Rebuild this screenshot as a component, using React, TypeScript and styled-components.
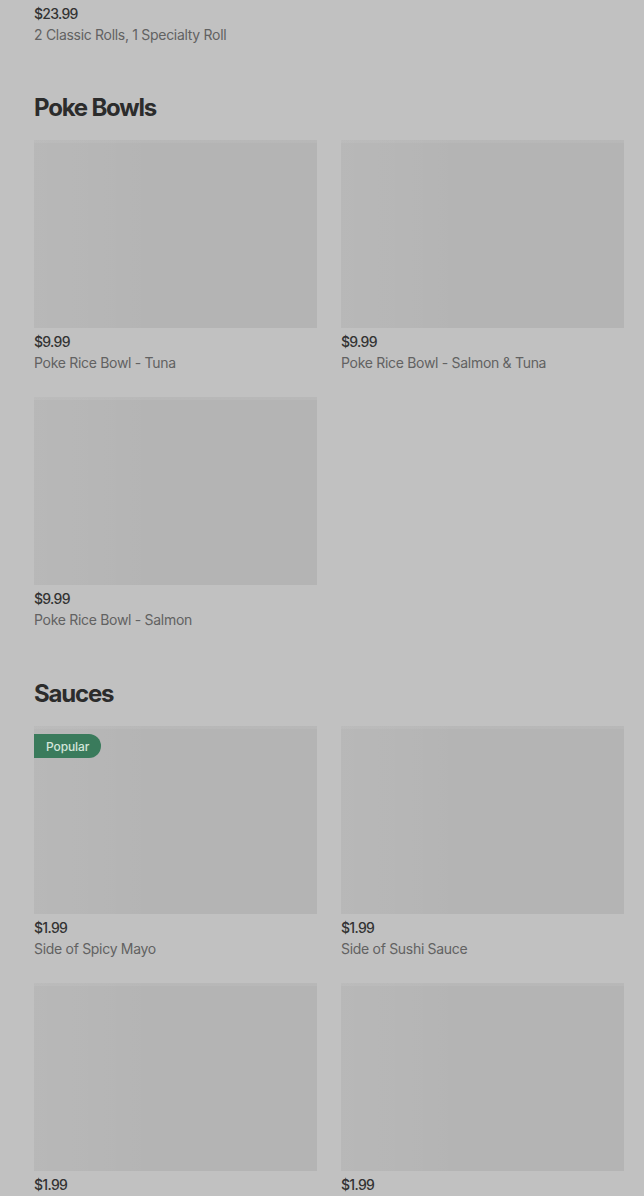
import React from "react";
import styled, { createGlobalStyle } from "styled-components";

const Global = createGlobalStyle`
  html, body { margin: 0; padding: 0; background: #c1c1c1; }
  body { font-family: Inter, "Noto Sans", Arial, sans-serif; -webkit-font-smoothing: antialiased; }
  * { box-sizing: border-box; }
`;

const Page = styled.div`
  width: 644px;
  height: 1196px;
  overflow: hidden;
  background: #c1c1c1;
  padding: 0 20px 0 34px;
  margin-top: -4px;
`;

const Section = styled.section`
  display: flex;
  flex-direction: column;
  padding-bottom: 47px;
`;

const Heading = styled.h2`
  margin: 1px 0 16px;
  font-size: 24px;
  line-height: 32px;
  font-weight: 700;
  letter-spacing: -1.2px;
  color: #2c2c2c;
`;

const Grid = styled.div`
  display: grid;
  grid-template-columns: 1fr 1fr;
  column-gap: 24px;
  row-gap: 24px;
`;

const Card = styled.div`
  display: flex;
  flex-direction: column;
`;

const Thumb = styled.div`
  position: relative;
  height: 188px;
  margin-bottom: 4px;
  background:
    linear-gradient(180deg, rgba(255,255,255,0.05) 0px, rgba(255,255,255,0.05) 3px, transparent 3px),
    linear-gradient(90deg, rgba(255,255,255,0.05) 0px, rgba(255,255,255,0.03) 60px, transparent 120px),
    #b4b4b4;
`;

const Badge = styled.span`
  position: absolute;
  left: 0;
  top: 8px;
  height: 24px;
  display: inline-flex;
  align-items: center;
  padding: 0 12px;
  border-radius: 0 12px 12px 0;
  background: #3a7b5c;
  color: #d3e6da;
  font-size: 12px;
  font-weight: 500;
  letter-spacing: -0.1px;
`;

const Price = styled.div<{ $top?: boolean }>`
  font-size: 14px;
  line-height: 20px;
  font-weight: 500;
  color: #333333;
  letter-spacing: -0.7px;
  padding-top: ${(p) => (p.$top ? "8px" : "0")};
`;

const Desc = styled.div`
  font-size: 14px;
  line-height: 21px;
  font-weight: 400;
  color: #626262;
  letter-spacing: -0.3px;
`;

const TopInfo = styled.div`
  display: flex;
  flex-direction: column;
  padding-bottom: 46px;
`;

type Item = { price: string; name?: string; popular?: boolean };

const sections: { title: string; items: Item[] }[] = [
  {
    title: "Poke Bowls",
    items: [
      { price: "$9.99", name: "Poke Rice Bowl - Tuna" },
      { price: "$9.99", name: "Poke Rice Bowl - Salmon & Tuna" },
      { price: "$9.99", name: "Poke Rice Bowl - Salmon" },
    ],
  },
  {
    title: "Sauces",
    items: [
      { price: "$1.99", name: "Side of Spicy Mayo", popular: true },
      { price: "$1.99", name: "Side of Sushi Sauce" },
      { price: "$1.99" },
      { price: "$1.99" },
    ],
  },
];

export default function App() {
  return (
    <>
      <Global />
      <Page>
        <TopInfo>
          <Price $top>$23.99</Price>
          <Desc>2 Classic Rolls, 1 Specialty Roll</Desc>
        </TopInfo>
        {sections.map((s) => (
          <Section key={s.title}>
            <Heading>{s.title}</Heading>
            <Grid>
              {s.items.map((it, i) => (
                <Card key={i}>
                  <Thumb>{it.popular && <Badge>Popular</Badge>}</Thumb>
                  <Price>{it.price}</Price>
                  {it.name && <Desc>{it.name}</Desc>}
                </Card>
              ))}
            </Grid>
          </Section>
        ))}
      </Page>
    </>
  );
}
